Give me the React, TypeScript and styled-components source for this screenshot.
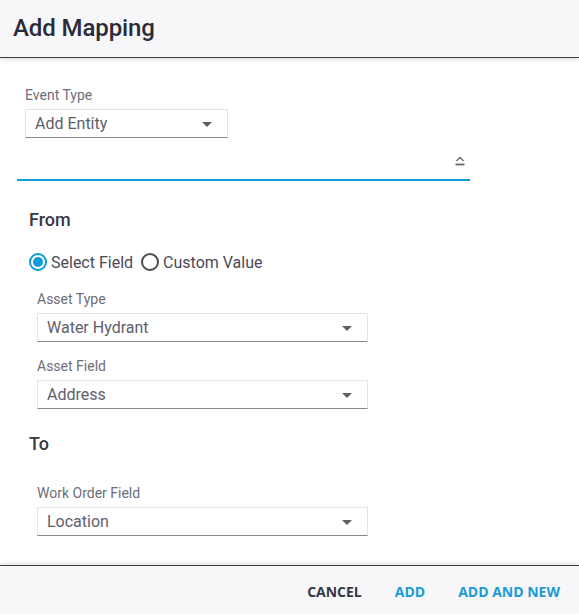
import React, { useState } from 'react';
import styled, { createGlobalStyle } from 'styled-components';

const GlobalStyle = createGlobalStyle`
  html, body {
    margin: 0;
    padding: 0;
    background: #ffffff;
  }
  body {
    font-family: Roboto, "Liberation Sans", Arial, sans-serif;
  }
  * {
    box-sizing: border-box;
  }
`;

// Dialog shell
const Dialog = styled.div`
  display: flex;
  flex-direction: column;
  height: 100vh;
  background: #ffffff;
`;

const Header = styled.header`
  position: relative;
  z-index: 1;
  height: 58px;
  display: flex;
  align-items: center;
  padding: 0 13px 2px;
  background: #f7f7f9;
  border-bottom: 1px solid #3c3c46;
  box-shadow: 0 2px 4px rgba(0, 0, 0, 0.12);
`;

const Title = styled.h1`
  margin: 0;
  font-size: 24px;
  font-weight: 500;
  color: #2b2b38;
  letter-spacing: -0.1px;
`;

const Body = styled.main`
  flex: 1;
  display: flex;
  flex-direction: column;
  padding-top: 29px;
  overflow: hidden;
`;

const Footer = styled.footer`
  position: relative;
  height: 49px;
  display: flex;
  align-items: center;
  justify-content: flex-end;
  gap: 33px;
  padding: 3px 19px 0 0;
  background: #f7f7f9;
  border-top: 1px solid #3c3c46;
  box-shadow: 0 -2px 4px rgba(0, 0, 0, 0.1);
`;

const ActionButton = styled.button<{ primary?: boolean }>`
  border: none;
  background: none;
  padding: 0;
  font-family: "Open Sans", "Liberation Sans", sans-serif;
  font-size: 14px;
  font-weight: 700;
  color: ${({ primary }) => (primary ? '#1a9bd7' : '#383844')};
  cursor: pointer;
`;

// Form fields
const Field = styled.div<{ indent: number; top: number }>`
  display: flex;
  flex-direction: column;
  gap: 6px;
  margin-left: ${({ indent }) => indent}px;
  margin-top: ${({ top }) => top}px;
`;

const Label = styled.label`
  font-size: 14px;
  line-height: 16px;
  color: #6e6e79;
`;

const SelectBox = styled.div<{ width: number }>`
  width: ${({ width }) => width}px;
  height: 29px;
  display: flex;
  align-items: center;
  justify-content: space-between;
  padding: 0 15px 1px 9px;
  border: 1px solid #e4e4e8;
  border-bottom: 1px solid #86868f;
  font-size: 16px;
  line-height: 19px;
  color: #60606c;
  background: #ffffff;
`;

const Caret = styled.span`
  width: 0;
  height: 0;
  border-left: 5px solid transparent;
  border-right: 5px solid transparent;
  border-top: 5px solid #5e5e66;
  margin-top: 2px;
`;

// Collapsible panel header
const PanelHeader = styled.div`
  margin: 0 109px 0 17px;
  height: 43px;
  display: flex;
  align-items: center;
  justify-content: flex-end;
  padding: 4px 5px 0 0;
  border-bottom: 2px solid #0d9ddb;
`;

const SectionTitle = styled.h2<{ top: number }>`
  margin: ${({ top }) => top}px 0 0 29px;
  font-size: 18px;
  line-height: 21px;
  font-weight: 500;
  color: #383844;
`;

const RadioRow = styled.div`
  display: flex;
  align-items: center;
  margin: 20px 0 0 29px;
  height: 24px;
`;

const RadioOption = styled.label`
  display: flex;
  align-items: center;
  gap: 4px;
  margin-right: 8px;
  font-size: 16px;
  color: #4a4a55;
  cursor: pointer;
`;

const RadioCircle = styled.span<{ checked: boolean }>`
  width: 18px;
  height: 18px;
  border-radius: 50%;
  border: 2px solid ${({ checked }) => (checked ? '#0e9bd8' : '#4a4a52')};
  display: flex;
  align-items: center;
  justify-content: center;
  &::after {
    content: '';
    width: 10px;
    height: 10px;
    border-radius: 50%;
    background: ${({ checked }) => (checked ? '#0e9bd8' : 'transparent')};
  }
`;

const CollapseIcon = () => (
  <svg width="10" height="10" viewBox="0 0 10 10">
    <path d="M1.5 5 L5 1.5 L8.5 5" fill="none" stroke="#666670" strokeWidth="1.4" />
    <rect x="0.5" y="7.6" width="9" height="1.8" fill="#666670" />
  </svg>
);

const Select = ({ value, width }: { value: string; width: number }) => (
  <SelectBox width={width}>
    <span>{value}</span>
    <Caret />
  </SelectBox>
);

export default function App() {
  const [source, setSource] = useState<'field' | 'custom'>('field');

  return (
    <>
      <GlobalStyle />
      <Dialog>
        <Header>
          <Title>Add Mapping</Title>
        </Header>

        <Body>
          <Field indent={25} top={0}>
            <Label>Event Type</Label>
            <Select value="Add Entity" width={203} />
          </Field>

          <PanelHeader>
            <CollapseIcon />
          </PanelHeader>

          <SectionTitle top={28}>From</SectionTitle>
          <RadioRow>
            <RadioOption onClick={() => setSource('field')}>
              <RadioCircle checked={source === 'field'} />
              Select Field
            </RadioOption>
            <RadioOption onClick={() => setSource('custom')}>
              <RadioCircle checked={source === 'custom'} />
              Custom Value
            </RadioOption>
          </RadioRow>

          <Field indent={37} top={17}>
            <Label>Asset Type</Label>
            <Select value="Water Hydrant" width={331} />
          </Field>
          <Field indent={37} top={16}>
            <Label>Asset Field</Label>
            <Select value="Address" width={331} />
          </Field>

          <SectionTitle top={24}>To</SectionTitle>
          <Field indent={37} top={31}>
            <Label>Work Order Field</Label>
            <Select value="Location" width={331} />
          </Field>
        </Body>

        <Footer>
          <ActionButton>CANCEL</ActionButton>
          <ActionButton primary>ADD</ActionButton>
          <ActionButton primary>ADD AND NEW</ActionButton>
        </Footer>
      </Dialog>
    </>
  );
}
